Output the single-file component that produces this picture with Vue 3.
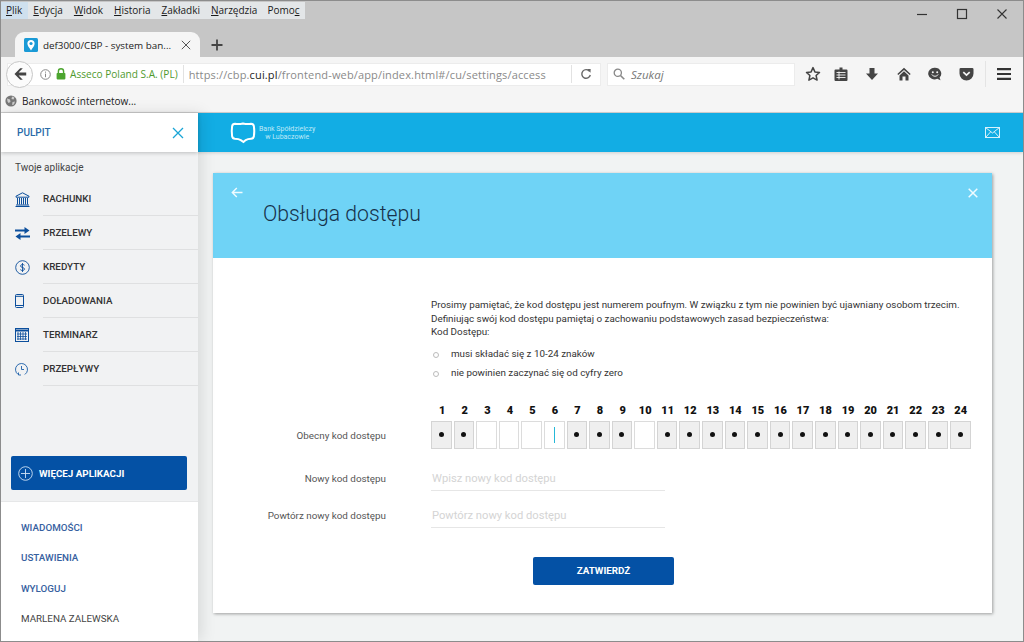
<template>
  <div class="window">
    <!-- browser chrome -->
    <div class="titlebar">
      <div class="top-row">
        <div class="menubar">
          <span v-for="(m, i) in menus" :key="m.label" class="menu-item" :class="{ active: i === 0 }">
            <template v-for="(part, j) in splitMenu(m)" :key="j"><u v-if="part.u">{{ part.t }}</u><template v-else>{{ part.t }}</template></template>
          </span>
        </div>
        <div class="win-controls">
          <svg width="12" height="12" viewBox="0 0 12 12"><path d="M1 6.5h10" stroke="#333" stroke-width="1.2" /></svg>
          <svg width="12" height="12" viewBox="0 0 12 12"><rect x="1.5" y="1.5" width="9" height="9" fill="none" stroke="#333" stroke-width="1.2" /></svg>
          <svg width="12" height="12" viewBox="0 0 12 12"><path d="M1.5 1.5l9 9M10.5 1.5l-9 9" stroke="#333" stroke-width="1.1" /></svg>
        </div>
      </div>
      <div class="tabstrip">
        <div class="tab">
          <svg class="favicon" width="14" height="14" viewBox="0 0 14 14">
            <rect width="14" height="14" rx="1.5" fill="#1a9ad6" />
            <path d="M7 12.5C5 9.5 3.4 7.8 3.4 5.6a3.6 3.6 0 0 1 7.2 0c0 2.2-1.6 3.9-3.6 6.9z" fill="#fff" />
            <circle cx="7" cy="5.500" r="1.6" fill="#1a9ad6" />
          </svg>
          <span class="tab-title">def3000/CBP - system ban...</span>
          <svg width="10" height="10" viewBox="0 0 10 10"><path d="M.8.8l8.4 8.4M9.2.8L.8 9.2" stroke="#555" stroke-width="1" /></svg>
        </div>
        <svg class="new-tab" width="12" height="12" viewBox="0 0 12 12"><path d="M6 .5v11M.5 6h11" stroke="#444" stroke-width="1.8" /></svg>
      </div>
    </div>

    <div class="toolbar">
      <div class="urlbar">
        <div class="back-btn">
          <svg width="14" height="14" viewBox="0 0 14 14"><path d="M7.2 1.2L1.5 7l5.7 5.8h2.6L5.6 8.4h7.6V5.6H5.6l4.2-4.4z" fill="#444" /></svg>
        </div>
        <svg class="info" width="11" height="11" viewBox="0 0 11 11"><circle cx="5.5" cy="5.5" r="4.8" fill="none" stroke="#888" /><path d="M5.5 4.6v3.6M5.5 2.6v1.1" stroke="#888" /></svg>
        <svg class="lock" width="10" height="12" viewBox="0 0 10 12"><path d="M2.4 5V3.4a2.6 2.6 0 0 1 5.2 0V5" fill="none" stroke="#4ca52f" stroke-width="1.4" /><rect x=".6" y="5" width="8.8" height="6.4" rx=".8" fill="#4ca52f" /></svg>
        <span class="org">Asseco Poland S.A. (PL)</span>
        <span class="url"><span>https://cbp.</span><b>cui.pl</b><span>/frontend-web/app/index.html#/cu/settings/access</span></span>
        <span class="reload-wrap">
          <svg width="12" height="12" viewBox="0 0 12 12"><path d="M9.6 3.4A4.3 4.3 0 1 0 10.3 7" fill="none" stroke="#666" stroke-width="1.4" /><path d="M7 .9l3.7.2-.2 3.6z" fill="#666" /></svg>
        </span>
      </div>
      <div class="search">
        <svg width="12" height="12" viewBox="0 0 12 12"><circle cx="4.8" cy="4.8" r="3.6" fill="none" stroke="#888" stroke-width="1.3" /><path d="M7.5 7.5l3.8 3.8" stroke="#888" stroke-width="1.6" /></svg>
        <span>Szukaj</span>
      </div>
      <div class="tool-icons">
        <svg class="t-star" width="16" height="16" viewBox="0 0 16 16"><path d="M8 1.6l1.9 4.3 4.6.5-3.4 3.1 1 4.6L8 11.8l-4.1 2.3 1-4.6L1.500 6.400l4.600-.5z" fill="none" stroke="#444" stroke-width="1.500" stroke-linejoin="round" /></svg>
        <svg class="t-list" width="14" height="16" viewBox="0 0 14 16"><path d="M1.500 3.500h11a1 1 0 0 1 1 1v9.500a1 1 0 0 1-1 1h-11a1 1 0 0 1-1-1V4.500a1 1 0 0 1 1-1zM5.500 3.500V1.500h3v2" fill="#444" /><path d="M2.500 6.500h9M2.500 9h9M2.500 11.500h9M5 5.500v8" stroke="#f5f5f5" stroke-width=".9" /></svg>
        <svg class="t-down" width="14" height="14" viewBox="0 0 14 14"><path d="M4.500 1h5v5.500H13L7 13 1 6.500h3.500z" fill="#444" /></svg>
        <svg class="t-home" width="14" height="14" viewBox="0 0 14 14"><path d="M7 .8L.3 7l1 1.100L7 3l5.700 5.100 1-1.100z" fill="#444" /><path d="M7 4.300L2.500 8.400V13.500H5.500V9.500h3v4h3V8.400z" fill="#444" /></svg>
        <svg class="t-smile" width="14" height="14" viewBox="0 0 14 14"><path d="M7 .8a6.200 5.800 0 0 1 4.600 9.700l.9 2.700-3.200-1.500A6.200 5.800 0 1 1 7 .8z" fill="#444" /><circle cx="4.800" cy="5.200" r="1" fill="#f5f5f5" /><circle cx="9.200" cy="5.200" r="1" fill="#f5f5f5" /><path d="M3.800 7.500c1.500 2.300 4.900 2.300 6.400 0" fill="none" stroke="#f5f5f5" stroke-width="1" /></svg>
        <svg class="t-pocket" width="15" height="14" viewBox="0 0 15 14"><path d="M1.800 1h11.400A1.300 1.300 0 0 1 14.500 2.300V6.500a7 7 0 0 1-14 0V2.300A1.300 1.300 0 0 1 1.800 1z" fill="#444" /><path d="M4.300 5.200l3.200 3 3.200-3" fill="none" stroke="#f5f5f5" stroke-width="1.700" /></svg>
        <span class="t-sep"></span>
        <svg class="t-menu" width="14" height="12" viewBox="0 0 14 12"><path d="M0 1.200h14M0 6h14M0 10.800h14" stroke="#333" stroke-width="2.200" /></svg>
      </div>
    </div>

    <div class="bookmarks">
      <svg width="12" height="12" viewBox="0 0 12 12"><circle cx="6" cy="6" r="5.600" fill="#777" /><path d="M2 3.500l3 1 .5 2.500-2 1-1-1.500zM7 1.500l2.500 1-1 2-2-.5zM7.500 7l2.500-.5-1 3-2 .5z" fill="#ccc" /></svg>
      <span>Bankowość internetow...</span>
    </div>

    <!-- page -->
    <div class="page">
      <aside class="sidebar">
        <div class="side-head">
          <span>PULPIT</span>
          <svg width="12" height="12" viewBox="0 0 12 12"><path d="M1 1l10 10M11 1L1 11" stroke="#1aa5d6" stroke-width="1.300" /></svg>
        </div>
        <div class="side-apps">
          <div class="apps-title">Twoje aplikacje</div>
          <div v-for="a in apps" :key="a.label" class="app-row">
            <span class="app-icon">
              <svg v-if="a.icon === 'bank'" width="15" height="15" viewBox="0 0 15 15"><path d="M7.500.8L1 4.200v1h13v-1z" fill="none" stroke="#0c4f9c" /><path d="M2.500 6v6.500M4.500 6v6.500M6.500 6v6.500M8.500 6v6.500M10.500 6v6.500M12.500 6v6.500M1 13h13M.5 14.500h14" stroke="#0c4f9c" /></svg>
              <svg v-else-if="a.icon === 'swap'" width="15" height="13" viewBox="0 0 15 13"><path d="M0 3.500h10M15 9.500H5" stroke="#0c4f9c" stroke-width="2.200" /><path d="M9.500 0l5 3.500-5 3.500zM5.500 6l-5 3.500 5 3.500z" fill="#0c4f9c" /></svg>
              <svg v-else-if="a.icon === 'coin'" width="15" height="15" viewBox="0 0 15 15"><circle cx="7.500" cy="7.500" r="6.800" fill="none" stroke="#0c4f9c" stroke-width=".9" /><path d="M9.500 5.300c-.5-1-3.800-1.300-4 .6-.2 2 4.200 1.200 4 3.200-.2 1.900-3.500 1.600-4.200.5M7.500 3v9" fill="none" stroke="#0c4f9c" stroke-width=".9" /></svg>
              <svg v-else-if="a.icon === 'phone'" width="9" height="14" viewBox="0 0 9 14"><rect x=".5" y=".5" width="8" height="13" rx="1" fill="none" stroke="#0c4f9c" /><path d="M.5 2.300h8M.5 11.500h8" stroke="#0c4f9c" /></svg>
              <svg v-else-if="a.icon === 'cal'" width="14" height="14" viewBox="0 0 14 14"><rect x=".5" y=".5" width="13" height="13" fill="none" stroke="#0c4f9c" /><path d="M.5 2.500h13" stroke="#0c4f9c" stroke-width="2" /><path d="M3 4v8M5.500 4v8M8 4v8M10.500 4v8M2 6h10M2 8.500h10M2 11h10" stroke="#0c4f9c" stroke-width=".8" /></svg>
              <svg v-else width="13" height="15" viewBox="0 0 13 15"><path d="M3.200 12.500a6 6 0 1 1 6.600 0" fill="none" stroke="#1a5ea8" stroke-width=".9" /><path d="M6.500 4v3.500h2.500" fill="none" stroke="#1a5ea8" stroke-width=".9" /><path d="M3.500 10.500v2.500h2.500" fill="none" stroke="#1a5ea8" stroke-width=".9" /></svg>
            </span>
            <span class="app-label">{{ a.label }}</span>
          </div>
          <div class="more-wrap">
            <button class="more-btn">
              <svg width="15" height="15" viewBox="0 0 15 15"><circle cx="7.500" cy="7.500" r="6.800" fill="none" stroke="#cfe2f5" stroke-width=".9" /><path d="M7.500 3v9M3 7.500h9" stroke="#cfe2f5" stroke-width=".9" /></svg>
              WIĘCEJ APLIKACJI
            </button>
          </div>
        </div>
        <div class="side-links">
          <a>WIADOMOŚCI</a>
          <a>USTAWIENIA</a>
          <a>WYLOGUJ</a>
          <span>MARLENA ZALEWSKA</span>
        </div>
      </aside>

      <main class="main">
        <header class="topbar">
          <div class="brand">
            <svg width="26" height="22" viewBox="0 0 26 22"><path d="M5 1.800c2.800.5 5.500.3 8-.3 2.500.6 5.200.8 8 .3 1.600 0 2.600.9 2.900 2.500.5 3.300.5 6.700 0 10-.3 1.600-1.300 2.400-2.900 2.500-2 .1-3.800.5-5.300 1.300L13.500 20l-2.700-1.900c-1.500-.8-3.300-1.200-5.800-1.300-1.600-.1-2.600-.9-2.900-2.500-.5-3.300-.5-6.700 0-10C2.400 2.700 3.400 1.800 5 1.800z" fill="none" stroke="#fff" stroke-width="2" /></svg>
            <div class="brand-text">Bank Spółdzielczy<br />w Lubaczowie</div>
          </div>
          <svg width="15" height="11" viewBox="0 0 15 11"><rect x=".5" y=".5" width="14" height="10" fill="none" stroke="#d8f2fc" /><path d="M.5.500L7.500 6l7-5.500M.5 10.500l5-5.500M14.500 10.500l-5-5.500" fill="none" stroke="#d8f2fc" /></svg>
        </header>

        <div class="content">
          <section class="card">
            <div class="card-head">
              <div class="head-icons">
                <svg width="12" height="11" viewBox="0 0 12 11"><path d="M11.500 5.500H1.500M5.800 1L1.300 5.500 5.800 10" fill="none" stroke="#f0fbff" stroke-width="1.400" /></svg>
                <svg width="10" height="10" viewBox="0 0 10 10"><path d="M.7.700l8.600 8.600M9.300.700L.7 9.300" stroke="#f0fbff" stroke-width="1.500" /></svg>
              </div>
              <h1>Obsługa dostępu</h1>
            </div>
            <div class="card-body">
              <div class="notice">
                <p>Prosimy pamiętać, że kod dostępu jest numerem poufnym. W związku z tym nie powinien być ujawniany osobom trzecim.</p>
                <p>Definiując swój kod dostępu pamiętaj o zachowaniu podstawowych zasad bezpieczeństwa:</p>
                <p>Kod Dostępu:</p>
                <ul>
                  <li>musi składać się z 10-24 znaków</li>
                  <li>nie powinien zaczynać się od cyfry zero</li>
                </ul>
              </div>
              <div class="digit-form">
                <div class="num-row">
                  <span v-for="d in digits" :key="d.n">{{ d.n }}</span>
                </div>
                <div class="form-row">
                  <label class="cell-label">Obecny kod dostępu</label>
                  <div class="cells">
                    <span v-for="d in digits" :key="d.n" class="cell" :class="{ filled: d.filled }">
                      <i v-if="d.filled" class="dot"></i>
                      <i v-if="d.n === 6" class="caret"></i>
                    </span>
                  </div>
                </div>
              </div>
              <div class="form-row text-row first">
                <label>Nowy kod dostępu</label>
                <div class="fake-input">Wpisz nowy kod dostępu</div>
              </div>
              <div class="form-row text-row">
                <label>Powtórz nowy kod dostępu</label>
                <div class="fake-input">Powtórz nowy kod dostępu</div>
              </div>
              <div class="submit-row">
                <button class="submit">ZATWIERDŹ</button>
              </div>
            </div>
          </section>
        </div>
      </main>
    </div>
  </div>
</template>

<script setup>
const menus = [
  { label: 'Plik', key: 0 },
  { label: 'Edycja', key: 0 },
  { label: 'Widok', key: 0 },
  { label: 'Historia', key: 0 },
  { label: 'Zakładki', key: 0 },
  { label: 'Narzędzia', key: 0 },
  { label: 'Pomoc', key: 4 },
]

const apps = [
  { label: 'RACHUNKI', icon: 'bank' },
  { label: 'PRZELEWY', icon: 'swap' },
  { label: 'KREDYTY', icon: 'coin' },
  { label: 'DOŁADOWANIA', icon: 'phone' },
  { label: 'TERMINARZ', icon: 'cal' },
  { label: 'PRZEPŁYWY', icon: 'clock' },
]

const empty = [3, 4, 5, 6, 10]
const digits = Array.from({ length: 24 }, (_, i) => ({
  n: i + 1,
  filled: !empty.includes(i + 1),
}))

function splitMenu(m) {
  const s = m.label
  return [
    { t: s.slice(0, m.key), u: false },
    { t: s[m.key], u: true },
    { t: s.slice(m.key + 1), u: false },
  ].filter((p) => p.t)
}
</script>

<style>
html, body { margin: 0; overflow: hidden; }
</style>

<style scoped>
.window {
  width: 1024px;
  height: 642px;
  box-sizing: border-box;
  border: 1px solid #8c8c8c;
  display: flex;
  flex-direction: column;
  font-family: "Open Sans", "Liberation Sans", sans-serif;
  background: #c6c6c6;
  overflow: hidden;
}

/* chrome */
.titlebar { height: 56px; flex-shrink: 0; display: flex; flex-direction: column; }
.top-row { display: flex; justify-content: space-between; height: 31px; }
.menubar {
  display: flex;
  height: 17px;
  margin-top: 1px;
  width: 304px;
  box-sizing: border-box;
  background: #e3e6e8;
  font-size: 10px;
  line-height: 17px;
  color: #1a1a1a;
}
.menu-item { padding: 0 5.5px; }
.menu-item:first-child { padding-left: 5px; }
.menu-item:last-child { margin-left: -1px; }
.menu-item.active { background: #cfe0ee; }
.win-controls { display: flex; gap: 28px; padding: 7px 15px 0 0; }
.win-controls svg { display: block; }

.tabstrip { display: flex; align-items: center; flex: 1; }
.tab {
  margin-left: 14px;
  width: 185px;
  height: 25px;
  box-sizing: border-box;
  background: #f5f5f5;
  border-radius: 9px 9px 0 0;
  display: flex;
  align-items: center;
  padding: 0 9px;
  font-size: 9.850px;
  color: #222;
}
.tab-title { margin-left: 5px; flex: 1; white-space: nowrap; }
.new-tab { margin-left: 11px; }

.toolbar {
  height: 32px;
  flex-shrink: 0;
  background: #f5f5f5;
  display: flex;
  align-items: center;
  padding: 2px 0 0 6px;
  box-sizing: border-box;
}
.urlbar {
  width: 594px;
  height: 23px;
  background: #fff;
  border: 1px solid #ececec;
  box-sizing: border-box;
  display: flex;
  align-items: center;
  position: relative;
  padding-left: 32px;
  white-space: nowrap;
}
.back-btn {
  position: absolute;
  left: -2px;
  top: -3px;
  width: 27px;
  height: 27px;
  box-sizing: border-box;
  border-radius: 50%;
  background: #fbfbfb;
  border: 1px solid #c8c8c8;
  display: flex;
  align-items: center;
  justify-content: center;
}
.lock { margin-left: 5px; }
.org { color: #4f9a2e; font-size: 10.100px; margin-left: 4px; padding-right: 5px; border-right: 1px solid #e2e2e2; line-height: 18px; }
.url { color: #8a8a8a; font-size: 11px; margin-left: 5px; letter-spacing: 0.15px; }
.url b { font-weight: 400; color: #222; }
.reload-wrap {
  margin-left: auto;
  width: 29px;
  height: 18px;
  box-sizing: border-box;
  border-left: 1px solid #e2e2e2;
  display: flex;
  align-items: center;
  justify-content: center;
}
.search {
  width: 188px;
  height: 23px;
  margin-left: 6px;
  background: #fff;
  border: 1px solid #ececec;
  box-sizing: border-box;
  display: flex;
  align-items: center;
  gap: 6px;
  padding-left: 5px;
  font-size: 11.500px;
  font-style: italic;
  color: #777;
}
.tool-icons { display: flex; align-items: center; }
.t-star { margin-left: 10px; }
.t-list { margin-left: 13px; }
.t-down { margin-left: 17px; }
.t-home { margin-left: 18px; }
.t-smile { margin-left: 17px; }
.t-pocket { margin-left: 17px; }
.t-sep { width: 1px; height: 26px; background: #e4e4e4; margin-left: 11px; }
.t-menu { margin-left: 11px; }

.bookmarks {
  height: 24px;
  flex-shrink: 0;
  background: #f5f5f5;
  display: flex;
  align-items: center;
  gap: 5px;
  padding: 0 0 0 4px;
  font-size: 10px;
  color: #222;
  border-bottom: 1px solid #d0d0d0;
  box-sizing: border-box;
}

/* page */
.page {
  flex: 1;
  min-height: 0;
  display: flex;
  font-family: Roboto, "Liberation Sans", sans-serif;
  background: #f1f3f3;
}
.sidebar {
  width: 197px;
  flex-shrink: 0;
  display: flex;
  flex-direction: column;
  box-shadow: 4px 0 14px rgba(0, 0, 0, 0.1);
  position: relative;
  z-index: 2;
  background: #fff;
}
.side-head {
  height: 39px;
  flex-shrink: 0;
  background: #fff;
  display: flex;
  align-items: center;
  justify-content: space-between;
  padding: 0 14px 0 16px;
  font-size: 10px;
  font-weight: 500;
  color: #2a6aa8;
  box-shadow: 0 1px 4px rgba(0, 0, 0, 0.22);
  position: relative;
}
.side-apps {
  flex: 1;
  background: #f1f2f3;
  display: flex;
  flex-direction: column;
  padding-bottom: 11px;
  border-bottom: 1px solid #e6e7e8;
}
.apps-title { font-size: 10px; color: #444; padding: 10px 0 0 14px; height: 20px; }
.app-row {
  height: 34px;
  display: flex;
  align-items: center;
  box-sizing: border-box;
}
.app-icon { width: 42px; flex-shrink: 0; padding-left: 14px; box-sizing: border-box; display: flex; align-items: center; }
.app-label {
  flex: 1;
  align-self: stretch;
  display: flex;
  align-items: center;
  font-size: 9.800px;
  font-weight: 500;
  color: #333;
  border-bottom: 1px solid #dfe0e1;
}
.more-wrap { margin-top: auto; padding: 0 10px; }
.more-btn {
  width: 176px;
  height: 34px;
  border: 0;
  border-radius: 2px;
  background: #0451a5;
  color: #fff;
  font-family: inherit;
  font-size: 9.800px;
  font-weight: 700;
  display: flex;
  align-items: center;
  gap: 6px;
  padding: 0 0 0 7px;
}
.side-links {
  height: 139px;
  flex-shrink: 0;
  background: #fff;
  box-sizing: border-box;
  padding: 11px 0 0 20px;
  display: flex;
  flex-direction: column;
  font-size: 9.800px;
}
.side-links a, .side-links span { height: 30.300px; line-height: 30.300px; }
.side-links a { color: #37619f; font-weight: 500; }
.side-links span { color: #444; }

.main { flex: 1; min-width: 0; display: flex; flex-direction: column; }
.topbar {
  height: 39px;
  flex-shrink: 0;
  background: #12ade4;
  display: flex;
  align-items: center;
  justify-content: space-between;
  padding: 0 23px 0 32px;
  box-shadow: 0 1px 3px rgba(0, 0, 0, 0.15);
}
.brand { display: flex; align-items: center; gap: 3px; }
.brand-text { font-size: 7px; line-height: 8px; color: #bfe9f8; text-align: center; }
.content { flex: 1; padding: 21px 31px 27px 15px; min-height: 0; }
.card {
  height: 440px;
  background: #fff;
  box-shadow: 1px 1px 3px rgba(0, 0, 0, 0.35);
}
.card-head { height: 85px; background: #6fd3f6; box-sizing: border-box; padding: 14px 14px 0 18px; }
.head-icons { display: flex; justify-content: space-between; align-items: center; }
.card-head h1 {
  margin: 3px 0 0 32px;
  font-size: 21.200px;
  font-weight: 300;
  line-height: 26px;
  color: #16314a;
}
.card-body { padding: 40px 21px 0 0; font-size: 9.850px; color: #333; }
.notice { margin-left: 218px; line-height: 13.500px; font-size: 9.830px; white-space: nowrap; }
.notice p { margin: 0; }
.notice ul { list-style: none; margin: 5px 0 0; padding: 0; }
.notice li { height: 19px; line-height: 19px; padding-left: 20px; position: relative; }
.notice li::before {
  content: "";
  position: absolute;
  left: 2px;
  top: 8px;
  width: 4px;
  height: 4px;
  border: 1px solid #bbb;
  border-radius: 50%;
}
.digit-form { margin-top: 22px; }
.num-row {
  margin-left: 218px;
  display: grid;
  grid-template-columns: repeat(24, 1fr);
  column-gap: 2px;
  font-size: 11px;
  font-weight: 900;
  text-align: center;
  color: #111;
  line-height: 13px;
  padding-left: 1px;
}
.form-row { display: flex; align-items: center; }
.form-row label {
  width: 173px;
  flex-shrink: 0;
  text-align: right;
  margin-right: 45px;
  color: #555;
  font-size: 9.850px;
}
.form-row .cell-label { margin-top: 5px; }
.cells {
  flex: 1;
  display: grid;
  grid-template-columns: repeat(24, 1fr);
  column-gap: 2px;
  margin-top: 4px;
}
.cell {
  height: 28px;
  box-sizing: border-box;
  border: 1px solid #dcdcdc;
  background: #fff;
  display: flex;
  align-items: center;
  justify-content: center;
}
.cell.filled { background: #efefef; border-color: #d4d4d4; }
.dot { width: 5px; height: 5px; border-radius: 50%; background: #111; }
.caret { width: 1px; height: 16px; background: #25b8d8; }
.text-row { height: 37px; align-items: flex-start; }
.text-row.first { margin-top: 15px; }
.text-row label { line-height: 29px; }
.fake-input {
  width: 233px;
  height: 26px;
  line-height: 29px;
  box-sizing: content-box;
  border-bottom: 1px solid #e6e6e6;
  color: #d4d4d4;
  font-size: 11.200px;
  padding-left: 1px;
}
.submit-row { display: flex; justify-content: center; margin: 19px 0 0 2px; padding-left: 21px; }
.submit {
  width: 141px;
  height: 28px;
  border: 0;
  border-radius: 2px;
  background: #0451a5;
  color: #fff;
  font-family: inherit;
  font-size: 9.800px;
  font-weight: 700;
}
</style>
